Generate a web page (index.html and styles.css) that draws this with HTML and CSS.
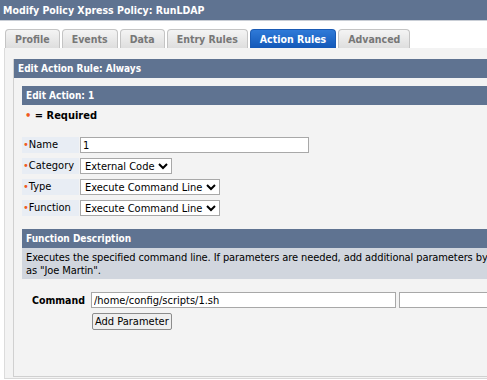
FILE: index.html
```html
<!DOCTYPE html>
<html>
<head>
<meta charset="utf-8">
<link rel="stylesheet" href="styles.css">
</head>
<body>
<div class="titlebar">Modify Policy Xpress Policy: RunLDAP</div>
<div class="tabs">
  <div class="tab">Profile</div>
  <div class="tab">Events</div>
  <div class="tab">Data</div>
  <div class="tab">Entry Rules</div>
  <div class="tab active">Action Rules</div>
  <div class="tab">Advanced</div>
</div>
<div class="content">
  <div class="rulepanel">
    <div class="hdr">Edit Action Rule: Always</div>
    <div class="rulebody">
      <div class="hdr">Edit Action: 1</div>
      <div class="required"><span class="dot">•</span> = Required</div>
      <div class="form">
        <div class="row"><div class="lbl"><span class="dot">•</span>Name</div><input class="txt name" type="text" value="1"></div>
        <div class="row"><div class="lbl"><span class="dot">•</span>Category</div><select class="sel"><option>External Code</option></select></div>
        <div class="row"><div class="lbl"><span class="dot">•</span>Type</div><select class="sel"><option>Execute Command Line</option></select></div>
        <div class="row"><div class="lbl"><span class="dot">•</span>Function</div><select class="sel"><option>Execute Command Line</option></select></div>
      </div>
      <div class="hdr">Function Description</div>
      <div class="desc">
        <div class="line">Executes the specified command line. If parameters are needed, add additional parameters by</div>
        <div class="line">as "Joe Martin".</div>
      </div>
      <div class="cmd">
        <div class="cmdlbl">Command</div>
        <div class="cmdfields">
          <div class="cmdinputs">
            <input class="txt cmdin" type="text" value="/home/config/scripts/1.sh">
            <input class="txt cmdin2" type="text" value="">
          </div>
          <button class="btn">Add Parameter</button>
        </div>
      </div>
    </div>
  </div>
</div>
</body>
</html>
```
FILE: styles.css
```css
* { box-sizing: border-box; }
html, body { margin: 0; padding: 0; background: #fff; overflow: hidden; }
body {
  width: 487px; height: 380px;
  font-family: "DejaVu Sans Condensed", "DejaVu Sans", Verdana, sans-serif;
  font-stretch: condensed;
  font-size: 11px;
  color: #000;
}
.titlebar {
  height: 21px;
  line-height: 20px;
  background: #5f7391;
  border-bottom: 1px solid #c9ced6;
  color: #fff;
  font-weight: bold;
  font-size: 10.5px;
  padding-left: 3px;
  white-space: nowrap;
}
.tabs {
  display: flex;
  gap: 2px;
  padding: 8px 0 0 5px;
  height: 27px;
  align-items: flex-end;
}
.tab {
  height: 19px;
  line-height: 18px;
  padding: 0 9px;
  border: 1px solid #c4c4c4;
  border-bottom: none;
  border-radius: 4px 4px 0 0;
  background: linear-gradient(#f4f4f4, #dedede);
  color: #777;
  font-weight: bold;
  font-size: 10.5px;
  white-space: nowrap;
}
.tab.active {
  background: linear-gradient(#2f7ad8, #1358b8);
  border-color: #1a5bb5;
  color: #fff;
}
.content {
  height: 331px;
  margin-left: 4px;
  background: #f3f3f3;
  border-left: 1px solid #dcdcdc;
  border-bottom: 1px solid #d8d8d8;
  padding: 11px 0 0 8px;
}
.rulepanel {
  height: 318px;
  border-left: 1px solid #d0d0d0;
  border-bottom: 1px solid #d0d0d0;
}
.hdr {
  height: 19px;
  line-height: 19px;
  background: #5f7391;
  color: #fff;
  font-weight: bold;
  font-size: 10px;
  padding-left: 4px;
  white-space: nowrap;
}
.rulebody {
  padding: 8px 0 0 8px;
}
.dot { color: #f05a1e; }
.required {
  font-weight: bold;
  font-size: 11px;
  padding: 4px 0 0 3px;
  height: 32px;
}
.form {
  display: flex;
  flex-direction: column;
  gap: 5px;
  margin-bottom: 13px;
}
.row {
  display: flex;
  align-items: center;
  gap: 1px;
  height: 16px;
}
.lbl {
  width: 57px;
  height: 16px;
  line-height: 16px;
  background: #e8edf4;
  padding-left: 1px;
  white-space: nowrap;
}
.txt, .sel, .btn {
  font-family: "DejaVu Sans Condensed", "DejaVu Sans", Verdana, sans-serif;
  font-stretch: condensed;
  font-size: 11px;
  color: #000;
  margin: 0;
}
.txt {
  height: 16px;
  border: 1px solid #a8a8a8;
  background: #fff;
  padding: 0 2px;
}
.name { width: 229px; }
.sel {
  height: 16px;
  border: 1px solid #a8a8a8;
  background: #fff;
  padding: 0;
}
.desc {
  background: #d1d6de;
  padding: 3px 0 0 4px;
  height: 31px;
  line-height: 13px;
  white-space: nowrap;
  overflow: hidden;
  letter-spacing: -0.1px;
}
.cmd {
  display: flex;
  padding: 13px 0 0 10px;
  gap: 6px;
}
.cmdlbl {
  font-weight: bold;
  font-size: 10.5px;
  line-height: 16px;
  width: 53px;
  white-space: nowrap;
}
.cmdfields { display: flex; flex-direction: column; gap: 5px; align-items: flex-start; }
.cmdinputs { display: flex; gap: 3px; }
.cmdin { width: 305px; }
.cmdin2 { width: 100px; }
.btn {
  height: 17px;
  padding: 0 2px;
  border: 1px solid #8c8c8c;
  border-radius: 2px;
  background: #efefef;
  margin-left: 1px;
}
```
